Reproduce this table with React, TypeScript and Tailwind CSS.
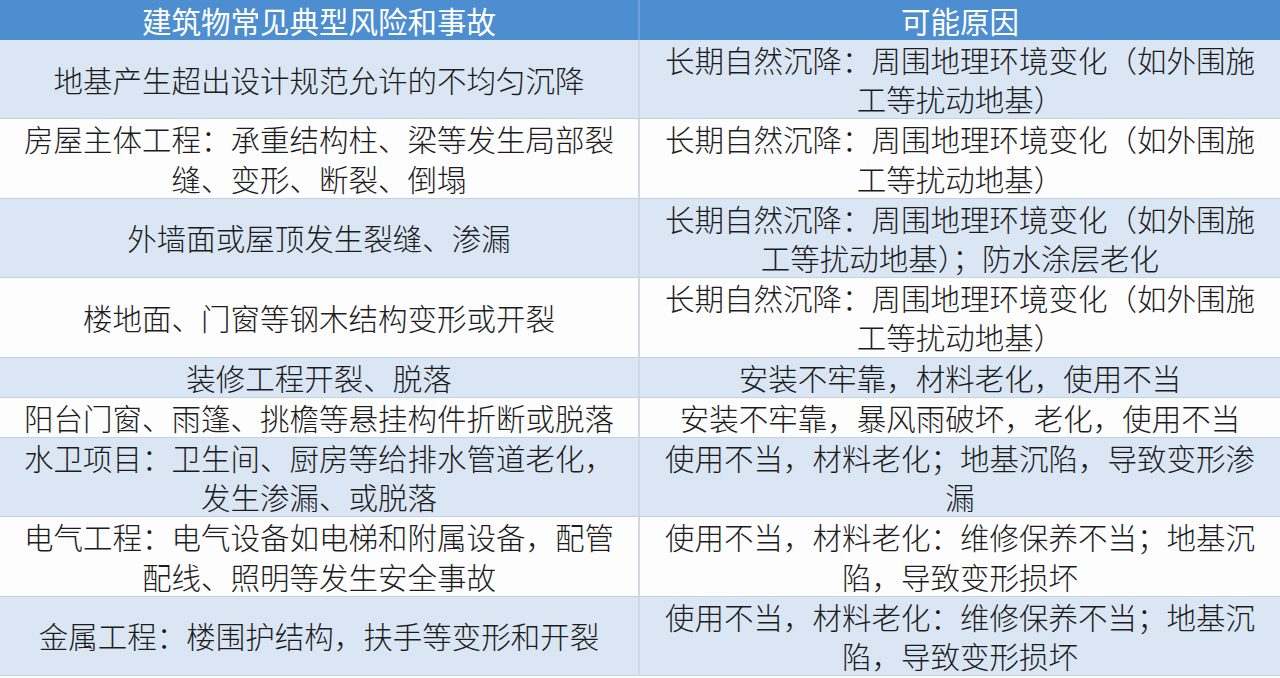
const rows: { risk: string; cause: string; tint: boolean }[] = [
  {
    risk: "地基产生超出设计规范允许的不均匀沉降",
    cause: "长期自然沉降：周围地理环境变化（如外围施工等扰动地基）",
    tint: true,
  },
  {
    risk: "房屋主体工程：承重结构柱、梁等发生局部裂缝、变形、断裂、倒塌",
    cause: "长期自然沉降：周围地理环境变化（如外围施工等扰动地基）",
    tint: false,
  },
  {
    risk: "外墙面或屋顶发生裂缝、渗漏",
    cause: "长期自然沉降：周围地理环境变化（如外围施工等扰动地基）；防水涂层老化",
    tint: true,
  },
  {
    risk: "楼地面、门窗等钢木结构变形或开裂",
    cause: "长期自然沉降：周围地理环境变化（如外围施工等扰动地基）",
    tint: false,
  },
  {
    risk: "装修工程开裂、脱落",
    cause: "安装不牢靠，材料老化，使用不当",
    tint: true,
  },
  {
    risk: "阳台门窗、雨篷、挑檐等悬挂构件折断或脱落",
    cause: "安装不牢靠，暴风雨破坏，老化，使用不当",
    tint: false,
  },
  {
    risk: "水卫项目：卫生间、厨房等给排水管道老化，发生渗漏、或脱落",
    cause: "使用不当，材料老化；地基沉陷，导致变形渗漏",
    tint: true,
  },
  {
    risk: "电气工程：电气设备如电梯和附属设备，配管配线、照明等发生安全事故",
    cause: "使用不当，材料老化：维修保养不当；地基沉陷，导致变形损坏",
    tint: false,
  },
  {
    risk: "金属工程：楼围护结构，扶手等变形和开裂",
    cause: "使用不当，材料老化：维修保养不当；地基沉陷，导致变形损坏",
    tint: true,
  },
];

export default function App() {
  return (
    <div
      className="w-[1280px] h-[678px] overflow-hidden bg-white text-[#1c1c1c]"
      style={{ fontFamily: '"Noto Sans CJK SC", "Noto Sans", sans-serif' }}
    >
      {/* Header */}
      <div className="grid grid-cols-2 h-[40px] bg-[#4d8ed1] text-white text-[29.5px] leading-[40px]">
        <div className="text-center border-r-2 border-[#6aa2da]">建筑物常见典型风险和事故</div>
        <div className="text-center">可能原因</div>
      </div>

      {/* Body rows */}
      {rows.map((row, i) => (
        <div
          key={i}
          className={`grid grid-cols-2 border-b border-[#c4d1df] ${
            row.tint ? "bg-[#dbe6f4]" : "bg-[#fdfdfe]"
          }`}
        >
          <div className="flex items-center justify-center px-[20px] text-center text-[29.5px] leading-[39.2px] font-light border-r-2 border-[#cfd8e3]">
            {row.risk}
          </div>
          <div className="flex items-center justify-center px-[20px] text-center text-[29.5px] leading-[39.2px] font-light">
            {row.cause}
          </div>
        </div>
      ))}
    </div>
  );
}
